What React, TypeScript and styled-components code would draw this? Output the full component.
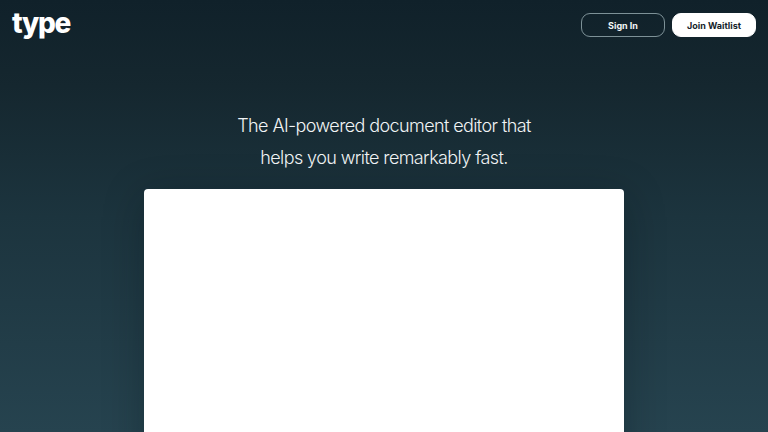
import React from "react";
import styled, { createGlobalStyle } from "styled-components";

const Global = createGlobalStyle`
  html, body { margin: 0; padding: 0; height: 100%; overflow: hidden; }
  #root { height: 100%; }
`;

const Page = styled.div`
  height: 432px;
  overflow: hidden;
  display: flex;
  flex-direction: column;
  align-items: center;
  background: linear-gradient(180deg, #10212a 0%, #15272f 20%, #1c343e 50%, #26434f 100%);
  font-family: Inter, "Liberation Sans", sans-serif;
`;

const Header = styled.header`
  box-sizing: border-box;
  width: 100%;
  height: 48px;
  display: flex;
  align-items: flex-start;
  justify-content: space-between;
  padding: 13px 12px 0 12px;
`;

const Logo = styled.div`
  font-size: 28px;
  line-height: 21px;
  font-weight: 800;
  letter-spacing: -1.3px;
  color: #fff;
`;

const Actions = styled.nav`
  display: flex;
  gap: 7px;
`;

const Button = styled.button<{ $primary?: boolean }>`
  box-sizing: border-box;
  width: 84px;
  height: 24px;
  padding: 0;
  border-radius: 9px;
  border: 1px solid ${(p) => (p.$primary ? "#fff" : "#7d9197")};
  background: ${(p) => (p.$primary ? "#fff" : "transparent")};
  color: ${(p) => (p.$primary ? "#14232b" : "#f2f5f6")};
  font-family: inherit;
  font-size: 9px;
  font-weight: 700;
`;

const Headline = styled.h1`
  margin: 73px 0 0;
  font-size: 18px;
  line-height: 32px;
  font-weight: 300;
  letter-spacing: -0.6px;
  color: #f1f4f5;
  text-align: center;
`;

const Card = styled.main`
  flex: none;
  width: 480px;
  height: 300px;
  margin-top: 15px;
  background: #fff;
  border-radius: 4px 4px 0 0;
  box-shadow: 0 8px 40px rgba(5, 15, 20, 0.3);
`;

export default function App() {
  return (
    <Page>
      <Global />
      <Header>
        <Logo>type</Logo>
        <Actions>
          <Button>Sign In</Button>
          <Button $primary>Join Waitlist</Button>
        </Actions>
      </Header>
      <Headline>
        The AI-powered document editor that
        <br />
        helps you write remarkably fast.
      </Headline>
      <Card />
    </Page>
  );
}
